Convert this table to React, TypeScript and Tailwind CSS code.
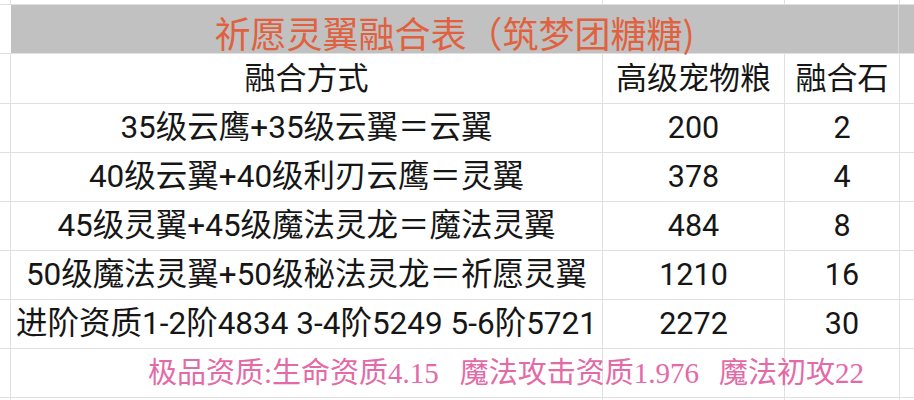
import React from "react";

const line = "border-[#e0e0e0]";
const sans = "font-['Roboto','Noto_Sans_CJK_SC',sans-serif]";

function Row({
  h,
  c1,
  c2,
  c3,
  className = "",
}: {
  h: string;
  c1?: React.ReactNode;
  c2?: React.ReactNode;
  c3?: React.ReactNode;
  className?: string;
}) {
  return (
    <div className={`grid grid-cols-[11px_592px_182px_115px_14px] ${h} border-b ${line} ${className}`}>
      <div className={`border-r ${line}`} />
      <div className={`border-r ${line} flex items-center justify-center whitespace-nowrap`}>{c1}</div>
      <div className={`border-r ${line} flex items-center justify-center whitespace-nowrap`}>{c2}</div>
      <div className={`border-r ${line} flex items-center justify-center whitespace-nowrap`}>{c3}</div>
      <div />
    </div>
  );
}

const rows: [string, string, string][] = [
  ["35级云鹰+35级云翼＝云翼", "200", "2"],
  ["40级云翼+40级利刃云鹰＝灵翼", "378", "4"],
  ["45级灵翼+45级魔法灵龙＝魔法灵翼", "484", "8"],
  ["50级魔法灵翼+50级秘法灵龙＝祈愿灵翼", "1210", "16"],
  ["进阶资质1-2阶4834 3-4阶5249 5-6阶5721", "2272", "30"],
];

export default function App() {
  return (
    <div className={`w-[914px] h-[400px] bg-white overflow-hidden ${sans} text-[#161616]`}>
      <Row h="h-[5px]" />
      {/* title */}
      <div className={`grid grid-cols-[11px_888px_15px] h-[49px] border-b ${line}`}>
        <div className="bg-white" />
        <div className="bg-[#c1c1c1] border-r border-[#d6d6d6] flex items-center justify-center pt-[5px]">
          <span className="text-[36px] leading-none text-[#e0613f] font-['Noto_Sans_CJK_SC',sans-serif]">
            祈愿灵翼融合表（筑梦团糖糖)
          </span>
        </div>
        <div className="bg-[#c1c1c1]" />
      </div>
      <Row
        h="h-[50px]"
        c1={<span className="text-[31px] leading-none">融合方式</span>}
        c2={<span className="text-[31px] leading-none">高级宠物粮</span>}
        c3={<span className="text-[31px] leading-none">融合石</span>}
      />
      {rows.map(([a, b, c]) => (
        <Row
          key={a}
          h="h-[49px]"
          c1={<span className="text-[31.5px] leading-none">{a}</span>}
          c2={<span className="text-[30.5px] leading-none">{b}</span>}
          c3={<span className="text-[30.5px] leading-none">{c}</span>}
        />
      ))}
      <div className="relative">
        <Row h="h-[49px]" />
        <div className="absolute inset-0 flex items-center pl-[148px] text-[29px] leading-none text-[#e36aa7] font-['Liberation_Serif','Noto_Sans_CJK_SC',serif] whitespace-nowrap">
          <span>极品资质:生命资质4.15</span>
          <span className="ml-[21px]">魔法攻击资质1.976</span>
          <span className="ml-[20px]">魔法初攻22</span>
        </div>
      </div>
      <Row h="h-[3px]" className="border-b-0" />
    </div>
  );
}
